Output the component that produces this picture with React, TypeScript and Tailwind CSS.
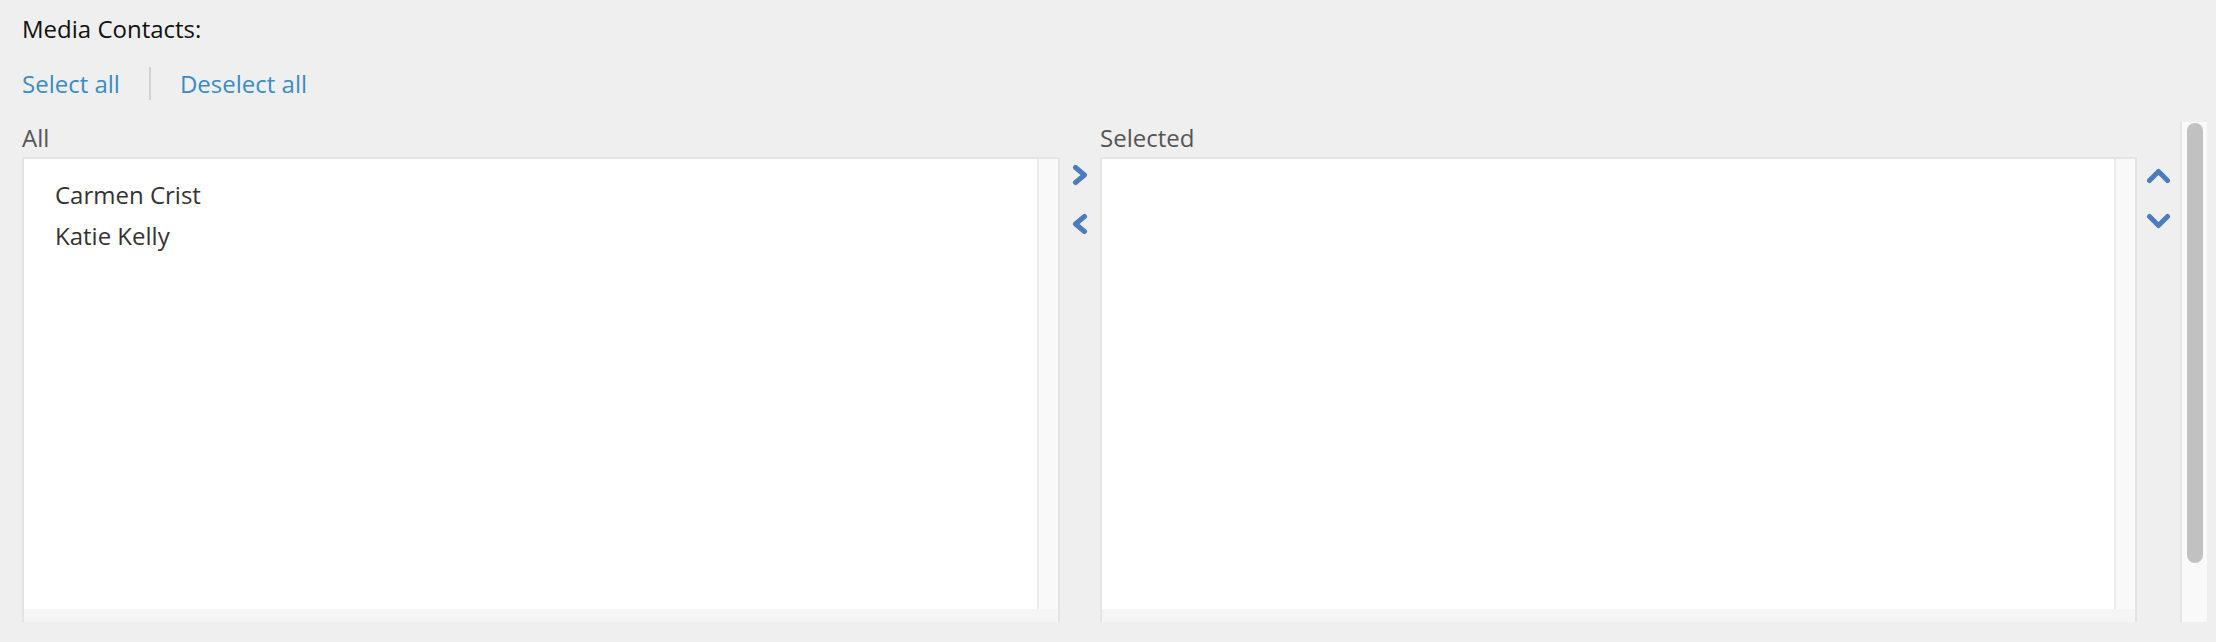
import React from "react";

const BLUE = "#4b7cbd";

const Chevron = ({ dir }: { dir: "right" | "left" | "up" | "down" }) => {
  if (dir === "right" || dir === "left") {
    const pts = dir === "right" ? "3.5,3.5 12.5,11 3.5,18.5" : "12.5,3.5 3.5,11 12.5,18.5";
    return (
      <svg width="16" height="22" viewBox="0 0 16 22" className="block">
        <polyline points={pts} fill="none" stroke={BLUE} strokeWidth="5" strokeLinecap="round" strokeLinejoin="round" />
      </svg>
    );
  }
  const pts = dir === "up" ? "3.5,12.5 12.5,3.5 21.5,12.5" : "3.5,3.5 12.5,12.5 21.5,3.5";
  return (
    <svg width="25" height="16" viewBox="0 0 25 16" className="block">
      <polyline points={pts} fill="none" stroke={BLUE} strokeWidth="5" strokeLinecap="round" strokeLinejoin="round" />
    </svg>
  );
};

const ListBox = ({ items }: { items: string[] }) => (
  <div className="flex flex-1 flex-col border-2 border-b-0 border-[#e4e4e4] bg-white">
    <div className="flex min-h-0 flex-1">
      <ul className="flex-1 pl-[31px] pt-[15px] text-[24px] leading-[41px] text-[#333]">
        {items.map((name) => (
          <li key={name}>{name}</li>
        ))}
      </ul>
      <div className="w-[21px] border-l-2 border-[#ececec] bg-[#f9f9f9]" />
    </div>
    <div className="h-[13px] bg-[#f5f5f5]" />
  </div>
);

export default function App() {
  return (
    <div className="h-[642px] w-[2216px] overflow-hidden bg-[#efefef] pl-[22px] pt-[13px] font-['Open_Sans',sans-serif]">
      <div className="text-[24px] leading-[32px] text-[#111]">Media Contacts:</div>

      <div className="mt-[22px] flex items-center text-[24px] leading-[32px] text-[#3a8cc4]">
        <span className="cursor-pointer">Select all</span>
        <span className="mx-[29px] h-[33px] w-[2px] bg-[#d2d2d2]" />
        <span className="cursor-pointer">Deselect all</span>
      </div>

      <div className="mt-[22px] flex h-[500px]">
        {/* all */}
        <div className="flex w-[1038px] flex-col">
          <div className="h-[35px] text-[24px] leading-[32px] text-[#555]">All</div>
          <ListBox items={["Carmen Crist", "Katie Kelly"]} />
        </div>

        {/* move buttons */}
        <div className="flex w-[40px] flex-col items-center pt-[42px]">
          <Chevron dir="right" />
          <div className="mt-[27px]">
            <Chevron dir="left" />
          </div>
        </div>

        {/* selected */}
        <div className="flex w-[1037px] flex-col">
          <div className="h-[35px] text-[24px] leading-[32px] text-[#555]">Selected</div>
          <ListBox items={[]} />
        </div>

        {/* order buttons */}
        <div className="flex w-[43px] flex-col items-center pt-[46px]">
          <Chevron dir="up" />
          <div className="mt-[29px]">
            <Chevron dir="down" />
          </div>
        </div>

        {/* scroll track */}
        <div className="w-[27px] border-l-2 border-[#e6e6e6] bg-[#f9f9f9] pl-[5px] pt-[1px]">
          <div className="h-[440px] w-[16px] rounded-full bg-[#c1c1c1]" />
        </div>
      </div>
    </div>
  );
}
